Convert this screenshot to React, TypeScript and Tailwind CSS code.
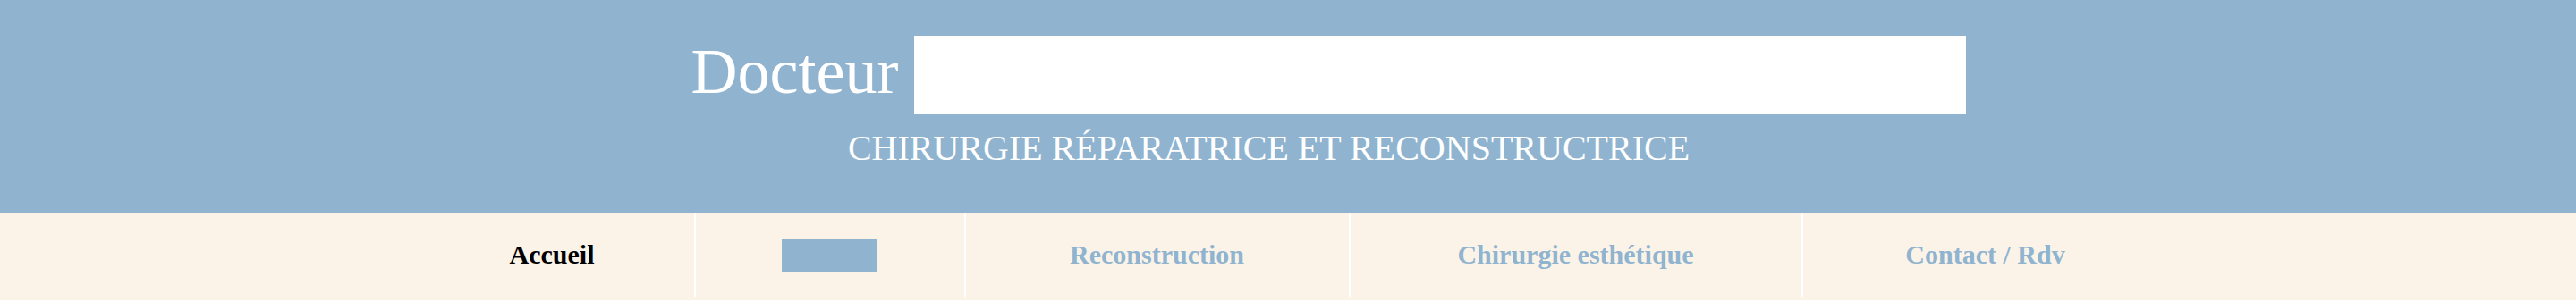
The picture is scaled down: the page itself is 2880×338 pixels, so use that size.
import React from "react";

const serif = { fontFamily: '"Liberation Serif", "Times New Roman", serif' };

export default function App() {
  const items = [
    { label: "Accueil", w: "w-[317px]", active: true },
    { label: "", w: "w-[302px]", box: true },
    { label: "Reconstruction", w: "w-[430px]" },
    { label: "Chirurgie esthétique", w: "w-[506px]" },
    { label: "Contact / Rdv", w: "w-[410px]" },
  ];
  return (
    <div className="w-[2880px]" style={serif}>
      <header className="h-[238px] bg-[#90b4d0] pt-[40px] text-white">
        <div className="flex justify-center pl-[91px]">
          <span className="mt-[4px] mr-[18px] block text-[72px] leading-[72px]">Docteur</span>
          <div className="h-[88px] w-[1176px] bg-white" />
        </div>
        <div className="mt-[18px] flex justify-center pr-[43px]">
          <span className="block text-[40px] leading-[40px]">CHIRURGIE RÉPARATRICE ET RECONSTRUCTRICE</span>
        </div>
      </header>
      <nav className="flex h-[98px] justify-center bg-[#fbf3e7] pl-[2px]">
        {items.map((it, i) => (
          <div
            key={i}
            className={`${it.w} flex h-[94px] items-center justify-center ${i > 0 ? "border-l-2 border-white" : ""}`}
          >
            {it.box ? (
              <div className="h-[37px] w-[107px] border-t border-[#c9d5de] bg-[#90b4d0]" />
            ) : (
              <span className={`text-[30px] font-bold leading-[30px] ${it.active ? "text-black" : "text-[#90b4d0]"}`}>
                {it.label}
              </span>
            )}
          </div>
        ))}
      </nav>
    </div>
  );
}
